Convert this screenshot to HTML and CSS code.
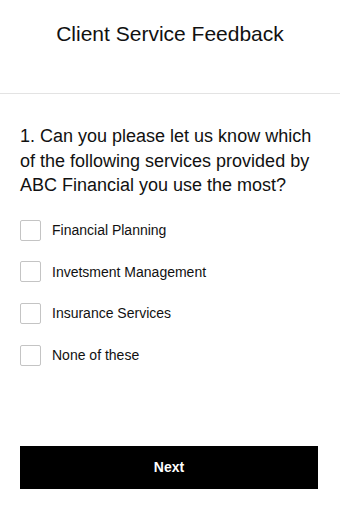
FILE: index.html
```html
<!DOCTYPE html>
<html>
<head>
<meta charset="utf-8">
<link rel="stylesheet" href="styles.css">
</head>
<body>
<div class="page">
  <header class="header">
    <h1 class="title">Client Service Feedback</h1>
  </header>
  <main class="content">
    <p class="question">1. Can you please let us know which of the following services provided by ABC Financial you use the most?</p>
    <ul class="options">
      <li class="option"><span class="box"></span><span class="label">Financial Planning</span></li>
      <li class="option"><span class="box"></span><span class="label">Invetsment Management</span></li>
      <li class="option"><span class="box"></span><span class="label">Insurance Services</span></li>
      <li class="option"><span class="box"></span><span class="label">None of these</span></li>
    </ul>
    <button class="next">Next</button>
  </main>
</div>
</body>
</html>
```
FILE: styles.css
```css
* { box-sizing: border-box; }
html, body { margin: 0; padding: 0; background: #fff; }
body {
  font-family: "Liberation Sans", Arial, sans-serif;
  color: #111;
  width: 340px;
  height: 520px;
}
.header {
  height: 94px;
  border-bottom: 1px solid #e3e3e3;
  padding-top: 22px;
}
.title {
  margin: 0;
  text-align: center;
  font-size: 21px;
  font-weight: normal;
  line-height: 24px;
}
.content {
  padding: 30px 22px 0 20px;
}
.question {
  margin: 0;
  font-size: 18px;
  line-height: 24.5px;
}
.options {
  list-style: none;
  margin: 22px 0 0;
  padding: 0;
  display: flex;
  flex-direction: column;
  gap: 20.7px;
}
.option {
  display: flex;
  align-items: center;
  gap: 11px;
  height: 21px;
}
.box {
  width: 21px;
  height: 21px;
  border: 1px solid #c4c4c4;
  border-radius: 2px;
  flex: none;
}
.label {
  font-size: 14px;
}
.next {
  display: block;
  margin-top: 80px;
  width: 298px;
  height: 43px;
  background: #000;
  color: #fff;
  border: none;
  font-family: "Liberation Sans", Arial, sans-serif;
  font-size: 14px;
  font-weight: bold;
}
```
